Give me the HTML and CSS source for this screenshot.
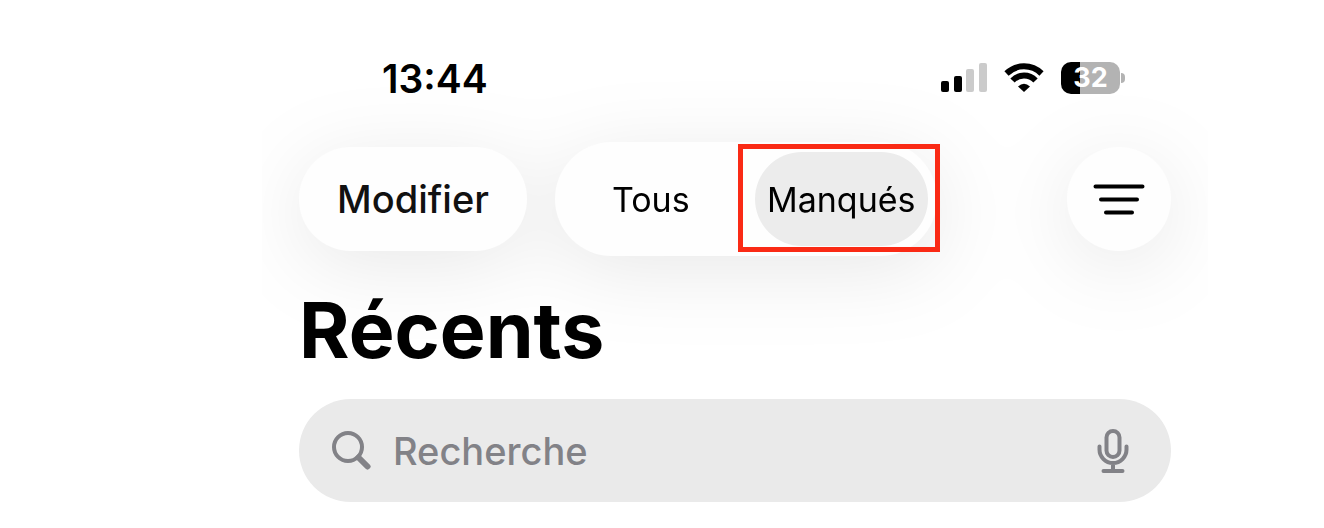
FILE: index.html
```html
<!DOCTYPE html>
<html lang="fr">
<head>
  <meta charset="UTF-8" />
  <meta name="viewport" content="width=device-width, initial-scale=1" />
  <title>Récents</title>
  <link rel="stylesheet" href="styles.css">
</head>
<body>

<div class="phone">
  <header class="status-bar">
    <time class="clock">13:44</time>
    <div class="status-icons">
      <svg class="signal" width="46" height="32" viewBox="0 0 46 32">
        <rect x="0" y="19" width="8" height="11" rx="2" />
        <rect x="13" y="14" width="8" height="16" rx="2" />
        <rect class="off" x="25" y="7" width="8" height="23" rx="2" />
        <rect class="off" x="38" y="1" width="8" height="29" rx="2" />
      </svg>
      <svg class="wifi" width="40" height="32" viewBox="0 0 40 32">
        <path class="arc" d="M2.500 11.500A25 25 0 0 1 37.500 11.500" />
        <path class="arc" d="M8.500 18.500A16 16 0 0 1 31.500 18.500" />
        <path d="M20 30L14 24.500Q20 19 26 24.500Z" />
      </svg>
      <div class="battery"><span class="level">32</span></div>
    </div>
  </header>

  <nav class="toolbar">
    <button class="edit" type="button">Modifier</button>
    <div class="segments" role="radiogroup" aria-label="Appels">
      <label class="segment"><input type="radio" name="calls">Tous</label>
      <label class="segment highlighted"><input type="radio" name="calls" checked>Manqués</label>
    </div>
    <button class="filter" type="button" aria-label="Filtrer">
      <svg width="52" height="34" viewBox="0 0 52 34">
        <path d="M2.500 4.500H49.500M8 17.500H44M13 30.500H39" />
      </svg>
    </button>
  </nav>

  <main>
    <h1>Récents</h1>
    <div class="search">
      <svg width="40" height="40" viewBox="0 0 40 40">
        <circle cx="17" cy="16" r="14" />
        <path class="handle" d="M27.500 26.500L36.500 35.500" />
      </svg>
      <input type="search" aria-label="Recherche" placeholder="Recherche">
      <button class="mic" type="button" aria-label="Dicter">
        <svg width="32" height="44" viewBox="0 0 32 44">
          <rect x="9.500" y="2" width="13" height="26" rx="6.500" />
          <path d="M2.500 17.500V20.500A13.500 13.500 0 0 0 29.500 20.500V17.500M16 34V42M6.500 42H25.500" />
        </svg>
      </button>
    </div>
  </main>
</div>

</body>
</html>
```
FILE: styles.css
```css
* {
  box-sizing: border-box;
}
body {
  margin: 0;
  padding: 0 116px 0 262px;
  background: #fff;
  color: #000;
  font-family: Inter, "Liberation Sans", sans-serif;
}
button, input {
  font: inherit;
  color: inherit;
}
button {
  padding: 0;
  border: 0;
  background: none;
}
svg {
  display: block;
  flex: none;
}
.phone {
  padding: 58px 37px 25px;
  overflow: hidden;
}

/* Status bar */
.status-bar {
  display: flex;
  justify-content: space-between;
  align-items: center;
  height: 40px;
  padding: 0 51px 0 83px;
}
.clock {
  font-size: 39px;
  font-weight: 600;
}
.status-icons {
  display: flex;
  align-items: center;
}
.signal {
  margin-right: 17px;
}
.signal .off {
  fill: #cbcbcb;
}
.wifi {
  margin-right: 17px;
}
.wifi .arc {
  fill: none;
  stroke: #000;
  stroke-width: 6;
}
.battery {
  position: relative;
  width: 59px;
  height: 32px;
  border-radius: 10px;
  background: linear-gradient(to right, #000 19px, #b3b3b3 19px);
  text-align: center;
}
.battery::after {
  content: "";
  position: absolute;
  top: 11px;
  right: -5px;
  width: 4px;
  height: 10px;
  border-radius: 0 5px 5px 0;
  background: #b3b3b3;
}
.level {
  color: #fff;
  font-size: 27px;
  font-weight: 700;
  line-height: 32px;
}

/* Floating buttons */
.toolbar {
  display: flex;
  align-items: center;
  margin-top: 44px;
  filter: drop-shadow(0 14px 40px rgba(0, 0, 0, 0.09));
}
.edit {
  width: 228px;
  height: 104px;
  margin-right: 28px;
  border-radius: 52px;
  background: #fefefe;
  color: #111;
  font-size: 38px;
  font-weight: 500;
}
.segments {
  display: grid;
  grid-template-columns: 1fr 1fr;
  gap: 17px;
  width: 382px;
  padding: 10px 9px;
  border-radius: 57px;
  background: #fefefe;
}
.segment {
  position: relative;
  display: flex;
  align-items: center;
  justify-content: center;
  height: 94px;
  border-radius: 47px;
  font-size: 34px;
}
.segment:has(:checked) {
  background: #ececec;
}
.segment input {
  position: absolute;
  margin: 0;
  opacity: 0;
}
.highlighted::after {
  content: "";
  position: absolute;
  inset: -8px -12px -6px -17px;
  border: 5px solid #fa2a15;
}
.filter {
  display: flex;
  align-items: center;
  justify-content: center;
  width: 104px;
  height: 104px;
  margin-left: auto;
  border-radius: 50%;
  background: #fefefe;
}
.filter path {
  fill: none;
  stroke: #000;
  stroke-width: 4;
  stroke-linecap: round;
}

/* Title and search */
h1 {
  margin: 28px 0 23px;
  font-size: 77px;
  font-weight: 700;
  line-height: 92px;
}
.search {
  display: flex;
  align-items: center;
  height: 103px;
  padding: 0 42px 0 32px;
  border-radius: 52px;
  background: #eaeaea;
  color: #828287;
}
.search svg {
  fill: none;
  stroke: currentColor;
  stroke-width: 4;
  stroke-linecap: round;
}
.search .handle {
  stroke-width: 6;
}
.search input {
  flex: 1;
  min-width: 0;
  margin: 0 22px;
  padding: 0;
  border: 0;
  outline: 0;
  background: none;
  font-size: 38px;
  font-weight: 500;
  appearance: none;
}
.search input::placeholder {
  color: #828287;
}
```
